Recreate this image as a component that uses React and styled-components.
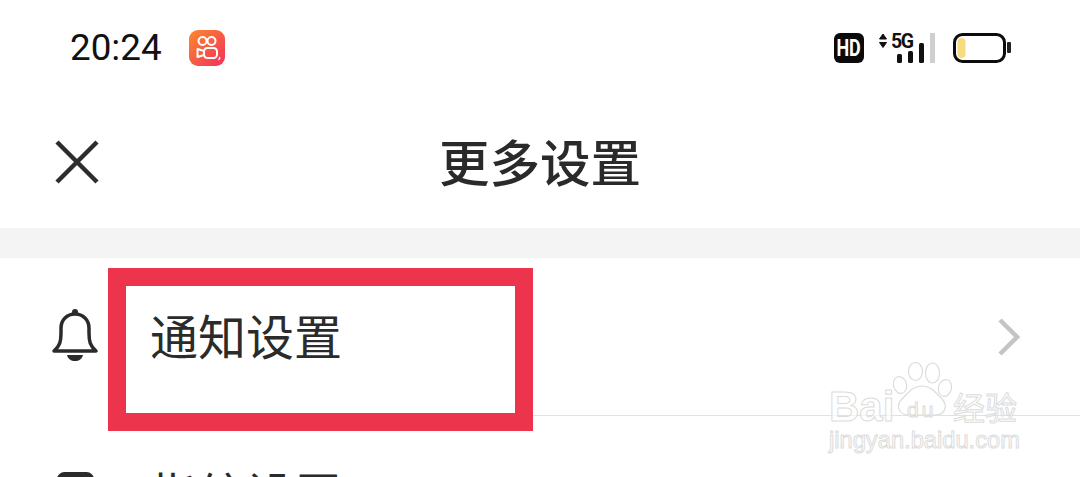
import React from 'react';
import styled, { createGlobalStyle } from 'styled-components';

const GlobalStyle = createGlobalStyle`
  html, body {
    margin: 0;
    height: 100%;
    background: #fff;
    overflow: hidden;
  }
`;

const Page = styled.div`
  position: relative;
  width: 1080px;
  height: 477px;
  overflow: hidden;
  background: #fff;
  font-family: "Noto Sans CJK SC", "Liberation Sans", sans-serif;
  color: #2b2b2b;
`;

const StatusBar = styled.div`
  height: 95px;
  box-sizing: border-box;
  padding: 1px 69px 0 70px;
  display: flex;
  align-items: center;
  justify-content: space-between;
`;

const StatusLeft = styled.div`
  display: flex;
  align-items: center;
  gap: 27px;
`;

const StatusRight = styled.div`
  display: flex;
  align-items: center;
`;

const Time = styled.span`
  font-family: Roboto, "Liberation Sans", sans-serif;
  font-size: 36.8px;
  line-height: 40px;
  color: #111;
`;

const HdBadge = styled.div`
  width: 30px;
  height: 30px;
  border-radius: 6px;
  background: #0a0a0a;
  color: #fff;
  display: flex;
  align-items: center;
  justify-content: center;
  margin-right: 15px;
`;

const HdText = styled.span`
  font: 700 23px/1 Roboto, "Liberation Sans", sans-serif;
  transform: scaleX(0.78);
`;

const SignalBox = styled.div`
  position: relative;
  width: 56px;
  height: 30px;
  margin-right: 18px;
`;

const NetworkLabel = styled.span`
  position: absolute;
  left: 12px;
  top: -1px;
  font: 700 19.5px/20px Roboto, "Liberation Sans", sans-serif;
  letter-spacing: -1.5px;
  color: #111;
`;

const NavBar = styled.div`
  height: 133px;
  box-sizing: border-box;
  padding: 0 54px;
  display: grid;
  grid-template-columns: 46px 1fr 46px;
  align-items: center;
`;

const Title = styled.h1`
  margin: 0 0 4px;
  text-align: center;
  font-size: 50.5px;
  line-height: 60px;
  font-weight: 500;
  color: #2a2a2a;
`;

const Band = styled.div`
  height: 30px;
  background: #f4f4f4;
`;

const Row = styled.div`
  height: 157px;
  box-sizing: border-box;
  display: flex;
  align-items: center;
  padding: 0 60px 0 52px;
`;

const IconSlot = styled.div`
  width: 46px;
  display: flex;
  justify-content: center;
  flex-shrink: 0;
  margin-bottom: 2px;
`;

const RowLabel = styled.span`
  flex: 1;
  margin: 0 0 5px 52px;
  font-size: 48px;
  line-height: 60px;
  color: #2b2b2b;
`;

const Divider = styled.div`
  height: 1px;
  margin-left: 108px;
  background: #e2e2e2;
`;

const Highlight = styled.div`
  position: absolute;
  left: 108px;
  top: 268px;
  width: 425px;
  height: 163px;
  box-sizing: border-box;
  border: 18px solid #ec354d;
`;

const Watermark = styled.div`
  position: absolute;
  left: 829px;
  top: 362px;
  width: 200px;
  height: 96px;
`;

const PawSvg = styled.svg`
  position: absolute;
  left: 64px;
  top: 0;
`;

const OutlineText = styled.span`
  position: absolute;
  left: ${({ $left }) => $left}px;
  top: ${({ $top }) => $top}px;
  font-family: ${({ $family }) => $family};
  font-size: ${({ $size }) => $size}px;
  font-weight: ${({ $weight }) => $weight || 400};
  letter-spacing: ${({ $spacing }) => $spacing || 0}px;
  line-height: 1;
  color: rgba(255, 255, 255, 0.6);
  -webkit-text-stroke: 1px #dcdcdc;
  white-space: nowrap;
`;

const AppLogo = () => (
  <svg width="36" height="36" viewBox="0 0 36 36">
    <defs>
      <linearGradient id="logoFill" x1="0" y1="0" x2="1" y2="1">
        <stop offset="0" stopColor="#fb8a2c" />
        <stop offset="1" stopColor="#f42f5c" />
      </linearGradient>
    </defs>
    <rect width="36" height="36" rx="9" fill="url(#logoFill)" />
    <g fill="none" stroke="#fff" strokeWidth="2">
      <circle cx="13.5" cy="11" r="4" />
      <circle cx="22.5" cy="11" r="4" />
      <rect x="15" y="18" width="13" height="10" rx="3.5" />
      <path d="M15 21 L8.5 19 V27 L15 25" strokeLinejoin="round" />
    </g>
    <path d="M30.5 27 q.8 1.5 -1 3" stroke="#fff" strokeWidth="1.4" fill="none" />
  </svg>
);

const SignalIcon = () => (
  <svg width="56" height="30" viewBox="0 0 56 30">
    <path d="M0.5 6 L4 1 L7.5 6 Z M0.5 9.5 L7.5 9.5 L4 14.5 Z" fill="#111" stroke="#111" strokeWidth="1" strokeLinejoin="round" />
    <g fill="#111">
      <rect x="18" y="21" width="5" height="9" rx="1.5" />
      <rect x="29" y="18" width="5" height="12" rx="1.5" />
      <rect x="40" y="10" width="5" height="20" rx="1.5" />
    </g>
    <rect x="51" y="0" width="5" height="30" fill="#cfcfcf" />
  </svg>
);

const BatteryIcon = () => (
  <svg width="58" height="30" viewBox="0 0 58 30">
    <rect x="1.5" y="1.5" width="50" height="27" rx="8" fill="#fff" stroke="#0c0c0c" strokeWidth="3" />
    <rect x="4.5" y="5" width="8" height="20" rx="4" fill="#f6dc7c" />
    <rect x="54" y="9" width="4" height="11" rx="1" fill="#222" />
  </svg>
);

const CloseIcon = () => (
  <svg width="46" height="46" viewBox="0 0 46 46">
    <path d="M3 3 L43 43 M43 3 L3 43" stroke="#2d2d2d" strokeWidth="4.5" fill="none" />
  </svg>
);

const BellIcon = () => (
  <svg width="46" height="56" viewBox="0 0 46 56">
    <circle cx="23" cy="4" r="3" fill="#2b2b2b" />
    <path
      d="M2 43 C8 38 9 33 9 25 V20 C9 12 15 6 23 6 C31 6 37 12 37 20 V25 C37 33 38 38 44 43 Z"
      fill="none"
      stroke="#2b2b2b"
      strokeWidth="3.5"
      strokeLinejoin="round"
    />
    <path d="M15 47 H31 C30 51 27 53 23 53 C19 53 16 51 15 47 Z" fill="#2b2b2b" />
  </svg>
);

const ChevronIcon = () => (
  <svg width="22" height="38" viewBox="0 0 22 38">
    <path d="M2 2 L19 19 L2 36" stroke="#c4c4c4" strokeWidth="4.5" fill="none" />
  </svg>
);

const FingerprintBoxIcon = () => (
  <svg width="37" height="43" viewBox="0 0 37 43">
    <rect x="2.5" y="2.5" width="32" height="38" rx="5" fill="none" stroke="#2b2b2b" strokeWidth="5" />
  </svg>
);

const PawIcon = () => (
  <PawSvg width="60" height="55" viewBox="0 0 60 55">
    <g fill="none" stroke="#dcdcdc" strokeWidth="1.2">
      <ellipse cx="7" cy="23" rx="6.5" ry="8.5" transform="rotate(-15 7 23)" />
      <ellipse cx="22.5" cy="9.5" rx="7" ry="9" />
      <ellipse cx="39.5" cy="11" rx="7" ry="10" />
      <ellipse cx="52" cy="26" rx="6.5" ry="8.5" transform="rotate(15 52 26)" />
      <path d="M29 24 C38 24 42 30 48 36 C56 44 52 53 42 53 H16 C6 53 2 44 9 37 C16 30 20 24 29 24 Z" />
    </g>
  </PawSvg>
);

const SANS = '"Liberation Sans", sans-serif';

export default function App() {
  return (
    <Page>
      <GlobalStyle />
      <StatusBar>
        <StatusLeft>
          <Time>20:24</Time>
          <AppLogo />
        </StatusLeft>
        <StatusRight>
          <HdBadge>
            <HdText>HD</HdText>
          </HdBadge>
          <SignalBox>
            <SignalIcon />
            <NetworkLabel>5G</NetworkLabel>
          </SignalBox>
          <BatteryIcon />
        </StatusRight>
      </StatusBar>
      <NavBar>
        <CloseIcon />
        <Title>更多设置</Title>
      </NavBar>
      <Band />
      <Row>
        <IconSlot>
          <BellIcon />
        </IconSlot>
        <RowLabel>通知设置</RowLabel>
        <ChevronIcon />
      </Row>
      <Divider />
      <Row>
        <IconSlot>
          <FingerprintBoxIcon />
        </IconSlot>
        <RowLabel>指纹设置</RowLabel>
      </Row>
      <Highlight />
      <Watermark>
        <PawIcon />
        <OutlineText $left={0} $top={24} $size={42} $weight={700} $family={SANS}>Bai</OutlineText>
        <OutlineText $left={124} $top={28} $size={32} $family={'"Noto Sans CJK SC", sans-serif'}>经验</OutlineText>
        <OutlineText $left={78} $top={37} $size={21} $spacing={3} $family={SANS}>du</OutlineText>
        <OutlineText $left={0} $top={67} $size={23.7} $family={SANS}>jingyan.baidu.com</OutlineText>
      </Watermark>
    </Page>
  );
}
